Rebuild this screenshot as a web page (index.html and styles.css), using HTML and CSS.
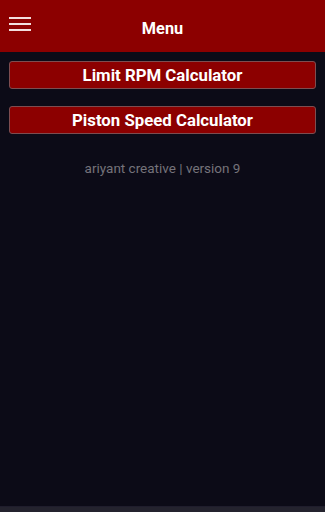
FILE: index.html
```html
<!DOCTYPE html>
<html>
<head>
<meta charset="utf-8">
<link rel="stylesheet" href="styles.css">
</head>
<body>
<div class="app">
  <header class="topbar">
    <div class="burger"><span></span><span></span><span></span></div>
    <div class="title">Menu</div>
  </header>
  <main class="content">
    <button class="btn">Limit RPM Calculator</button>
    <button class="btn">Piston Speed Calculator</button>
    <p class="credit">ariyant creative | version 9</p>
  </main>
  <div class="bottom"></div>
</div>
</body>
</html>
```
FILE: styles.css
```css
html, body { margin: 0; padding: 0; }
body {
  background: #0c0b17;
  font-family: Roboto, "Liberation Sans", sans-serif;
  width: 325px;
  height: 512px;
  overflow: hidden;
}
.app {
  height: 512px;
  display: flex;
  flex-direction: column;
}
.topbar {
  height: 52px;
  background: #8c0000;
  position: relative;
  display: flex;
  align-items: center;
  justify-content: center;
  flex-shrink: 0;
}
.burger {
  position: absolute;
  left: 9px;
  top: 17px;
  width: 22px;
  display: flex;
  flex-direction: column;
  gap: 4px;
}
.burger span {
  display: block;
  height: 2px;
  background: #f2dede;
}
.title {
  color: #fff;
  font-weight: 700;
  font-size: 16.3px;
  margin-top: 4px;
}
.content {
  flex: 1;
  padding: 9px 9px 0 9px;
  display: flex;
  flex-direction: column;
}
.btn {
  height: 28px;
  background: #8c0000;
  border: 1px solid #7d4d50;
  border-radius: 3px;
  color: #fff;
  font-family: Roboto, "Liberation Sans", sans-serif;
  font-weight: 700;
  font-size: 16.8px;
  padding: 0;
  margin: 0 0 17px 0;
  line-height: 24px;
}
.credit {
  margin: 9px 0 0 0;
  text-align: center;
  color: #75737a;
  font-size: 13.5px;
}
.bottom {
  height: 5px;
  border-top: 1px solid #1f1d2c;
  background: #24232e;
  flex-shrink: 0;
}
```
